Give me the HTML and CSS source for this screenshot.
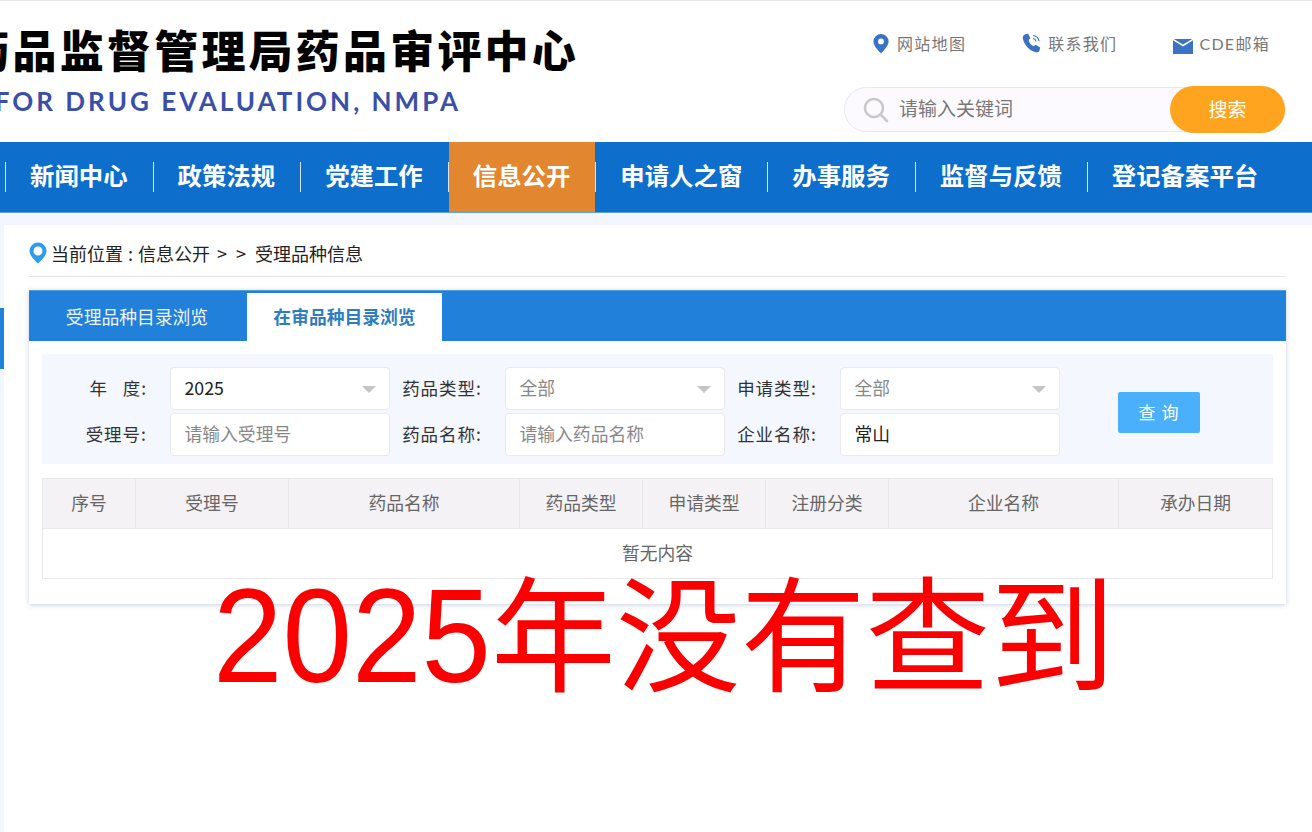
FILE: index.html
```html
<!DOCTYPE html>
<html lang="zh-CN">
<head>
<meta charset="utf-8">
<title>受理品种信息</title>
<link rel="stylesheet" href="styles.css">
</head>
<body>
<div class="page">
  <header class="header">
    <div class="brand">
      <div class="brand-cn">国家药品监督管理局药品审评中心</div>
      <div class="brand-en">CENTER FOR DRUG EVALUATION, NMPA</div>
    </div>
    <div class="tools">
      <div class="links">
        <a class="link link-map">
          <svg class="ico" width="18" height="21" viewBox="0 0 18 21"><path fill="#3a72c4" fill-rule="evenodd" d="M9 1a7.6 7.6 0 0 0-7.6 7.6C1.400 13.500 9 20.500 9 20.500s7.600-7 7.600-11.900A7.600 7.600 0 0 0 9 1zm0 10.300a2.900 2.900 0 1 1 0-5.800 2.900 2.900 0 0 1 0 5.800z"/></svg>
          <span>网站地图</span>
        </a>
        <a class="link link-phone">
          <svg class="ico" width="20" height="20" viewBox="0 0 20 20"><path fill="#3a72c4" d="M3.200 1.200 6 .6l2.400 4.600-1.800 1.700c.6 2.600 2.400 5 5 6.400l2-1.500 4.600 2.700-.6 2.800c-.4 1.600-2 2.400-3.600 2C7.500 18 2 11.500.8 5.500.5 3.500 1.600 1.800 3.200 1.200z"/><path fill="none" stroke="#3a72c4" stroke-width="1.200" d="M11 2.500c3 .2 5.500 2.700 6 5.500M11 5.500c1.500.2 2.700 1.300 3 2.800"/></svg>
          <span>联系我们</span>
        </a>
        <a class="link link-mail">
          <svg class="ico mail" width="20" height="15" viewBox="0 0 20 15"><path fill="#3a72c4" d="M0 1.200 10 7.500l10-6.300V15H0zM.8 0h18.400L10 5.500z"/></svg>
          <span>CDE邮箱</span>
        </a>
      </div>
      <div class="search">
        <svg class="search-ico" width="26" height="26" viewBox="0 0 26 26"><circle cx="11" cy="11" r="9" fill="none" stroke="#c9c9c9" stroke-width="2.600"/><path d="m18 18 6 6" stroke="#c9c9c9" stroke-width="2.600" stroke-linecap="round"/></svg>
        <span class="search-text">请输入关键词</span>
        <button class="search-btn">搜索</button>
      </div>
    </div>
  </header>

  <nav class="nav">
    <a class="nav-item">新闻中心</a>
    <a class="nav-item">政策法规</a>
    <a class="nav-item">党建工作</a>
    <a class="nav-item active">信息公开</a>
    <a class="nav-item">申请人之窗</a>
    <a class="nav-item">办事服务</a>
    <a class="nav-item">监督与反馈</a>
    <a class="nav-item last">登记备案平台</a>
  </nav>

  <div class="body">
    <aside class="side"><div class="side-mark"></div></aside>
    <main class="main">
      <div class="crumb">
        <svg width="18" height="22" viewBox="0 0 18 22"><path fill="#2d9cf0" fill-rule="evenodd" d="M9 .5A8.500 8.500 0 0 0 .5 9C.5 14.500 9 21.500 9 21.500S17.500 14.500 17.500 9A8.500 8.500 0 0 0 9 .5zm0 13a4.500 4.500 0 1 1 0-9 4.500 4.500 0 0 1 0 9z"/></svg>
        <span class="crumb-text">当前位置 : 信息公开<span class="arrows">&gt; &gt;</span>受理品种信息</span>
      </div>
      <section class="card">
        <div class="tabs">
          <div class="tab">受理品种目录浏览</div>
          <div class="tab on">在审品种目录浏览</div>
        </div>
        <div class="card-body">
          <form class="filter">
            <label class="lab">年&nbsp;&nbsp;&nbsp;度:</label>
            <div class="field sel dark">2025</div>
            <label class="lab">药品类型:</label>
            <div class="field sel">全部</div>
            <label class="lab">申请类型:</label>
            <div class="field sel">全部</div>
            <div class="btn-cell"><button type="button" class="query">查 询</button></div>
            <label class="lab">受理号:</label>
            <div class="field">请输入受理号</div>
            <label class="lab">药品名称:</label>
            <div class="field">请输入药品名称</div>
            <label class="lab">企业名称:</label>
            <div class="field dark">常山</div>
          </form>
          <table class="tbl">
            <colgroup>
              <col class="c1"><col class="c2"><col class="c3"><col class="c4"><col class="c5"><col class="c6"><col class="c7"><col class="c8">
            </colgroup>
            <thead>
              <tr><th>序号</th><th>受理号</th><th>药品名称</th><th>药品类型</th><th>申请类型</th><th>注册分类</th><th>企业名称</th><th>承办日期</th></tr>
            </thead>
            <tbody>
              <tr><td colspan="8">暂无内容</td></tr>
            </tbody>
          </table>
        </div>
      </section>
    </main>
  </div>
  <div class="stamp"><span class="stamp-num">2025</span><span class="stamp-cn">年没有查到</span></div>
</div>
</body>
</html>
```
FILE: styles.css
```css
* { box-sizing: border-box; }
html, body { margin: 0; padding: 0; }
body {
  width: 1312px;
  height: 832px;
  overflow: hidden;
  background: #fff;
  font-family: "Noto Sans CJK SC", "Noto Sans", sans-serif;
}
.page { position: relative; width: 1312px; height: 832px; overflow: hidden; }

.header {
  display: flex;
  height: 142px;
  border-top: 1px solid #e6e6e6;
}
.brand { width: 581px; overflow: hidden; flex: none; }
.brand-cn, .brand-en { display: flex; justify-content: flex-end; white-space: nowrap; }
.brand-cn {
  margin-top: 22px;
  padding-right: 2px;
  height: 52px;
  line-height: 52px;
  font-size: 44px;
  font-weight: 900;
  letter-spacing: 3.200px;
  color: #000;
}
.brand-en {
  margin-top: 11px;
  padding-right: 120px;
  height: 30px;
  line-height: 30px;
  font-family: Lato, sans-serif;
  font-size: 26px;
  font-weight: 700;
  letter-spacing: 3px;
  color: #3a4fa8;
}
.tools { flex: 1; position: relative; }
.links { display: flex; height: 30px; margin-top: 27px; padding-left: 291px; font-family: Lato, "Noto Sans CJK SC", sans-serif; font-size: 16px; letter-spacing: 1.300px; color: #777; }
.link { display: flex; align-items: center; gap: 7px; }
.link-phone { margin-left: 56px; gap: 6px; }
.link-mail { margin-left: 56px; gap: 6px; }
.ico { flex: none; }
.mail { margin-top: 6px; }
.search {
  display: flex;
  align-items: center;
  margin: 29px 0 0 263px;
  width: 442px;
  height: 45px;
  background: #fdfaff;
  border: 1px solid #e8e8ee;
  border-radius: 23px;
  padding-left: 18px;
  padding-bottom: 3px;
  position: relative;
}
.search-ico { margin-top: 3px; }
.search-text { margin-left: 10px; padding-bottom: 2px; font-size: 19px; color: #777; }
.search-btn {
  position: absolute;
  right: 0;
  top: -2px;
  width: 115px;
  height: 47px;
  padding: 0 0 3px;
  border: 0;
  border-radius: 24px;
  background: #ffa41f;
  color: #fff;
  font: 400 19px "Noto Sans CJK SC", sans-serif;
}

.nav {
  display: flex;
  height: 71px;
  padding: 0 0 0 5px;
  background: #0d6ecb;
  border-bottom: 1px solid #5aa0dc;
  align-items: stretch;
}
.nav-item {
  position: relative;
  display: flex;
  align-items: center;
  padding: 0 25px 6px;
  font-size: 24.400px;
  font-weight: 700;
  color: #fff;
  white-space: nowrap;
}
.nav-item::before {
  content: "";
  position: absolute;
  left: 0;
  top: 20px;
  height: 30px;
  width: 1px;
  background: #d5e6f6;
}
.nav-item.active {
  padding-left: 24px;
  border-left: 1px solid transparent;
  background: #e2862f padding-box;
}
.nav-item.active::before { left: -1px; }

.body {
  display: flex;
  background: #f3f6fe;
  height: 620px;
  padding-top: 12px;
}
.side { width: 4px; flex: none; position: relative; }
.side-mark { margin-top: 83px; height: 61px; background: #1f82dc; }
.main { flex: 1; background: #fff; padding: 0 27px 0 25px; }

.crumb {
  display: flex;
  align-items: center;
  gap: 4px;
  height: 52px;
  border-bottom: 1px solid #e6e6e6;
  font-size: 18px;
  color: #222;
  padding-top: 5px;
}
.crumb-text { word-spacing: 1px; }
.arrows { margin: 0 9px 0 7px; word-spacing: 5px; }
.card {
  margin-top: 13px;
  box-shadow: 0 1px 5px rgba(60, 90, 150, .28);
  height: 314px;
}
.tabs { display: flex; height: 51px; padding-top: 2px; background: #2080da; border-top: 1px solid #4d9ee0; }
.tab {
  width: 218px;
  display: flex;
  align-items: center;
  justify-content: center;
  padding: 0 2px 2px 0;
  font-size: 17.800px;
  color: #eef6ff;
}
.tab.on { width: 195px; padding-right: 0; background: #fff; color: #2f7dbf; font-weight: 700; }

.card-body { padding: 13px 13px 0; }
.filter {
  display: grid;
  grid-template-columns: 128px 220px 115px 220px 115px 220px 1fr;
  grid-auto-rows: 43px;
  row-gap: 3px;
  height: 110px;
  padding-top: 13px;
  background: #f5f7fe;
}
.lab {
  display: flex;
  align-items: center;
  justify-content: flex-end;
  padding: 0 23px 3px 0;
  font-size: 17.500px;
  letter-spacing: 1px;
  color: #333;
  white-space: nowrap;
}
.field {
  position: relative;
  display: flex;
  align-items: center;
  padding: 0 0 3px 13.500px;
  background: #fff;
  border: 1px solid #e9e9ef;
  border-radius: 4px;
  font-size: 17.800px;
  color: #888;
}
.field.dark { color: #222; }
.sel::after {
  content: "";
  position: absolute;
  right: 13px;
  top: 18px;
  border-style: solid;
  border-width: 7px 7.500px 0;
  border-color: #c4c4c4 transparent transparent;
}
.btn-cell { grid-column: 7; grid-row: 1 / 3; display: flex; align-items: center; padding: 2px 0 0 58px; }
.query {
  width: 82px;
  height: 41px;
  padding: 0 0 3px;
  border: 0;
  border-radius: 2px;
  background: #4bb0fb;
  color: #fff;
  font: 17px "Noto Sans CJK SC", sans-serif;
  letter-spacing: 1px;
}

.tbl {
  margin-top: 14px;
  width: 1230px;
  table-layout: fixed;
  border-collapse: collapse;
  font-size: 17.800px;
  color: #666;
}
.c1 { width: 93px; } .c2 { width: 153px; } .c3 { width: 231px; } .c4, .c5, .c6 { width: 123px; } .c7 { width: 230px; } .c8 { width: 154px; }
.tbl th, .tbl td { height: 50px; border: 1px solid #e8e8ec; text-align: center; font-weight: 400; padding: 0 0 3px; }
.tbl th { background: #f5f2f6; }

.stamp {
  position: absolute;
  left: 213px;
  top: 553px;
  display: flex;
  align-items: baseline;
  line-height: 150px;
  color: #fb0000;
  white-space: nowrap;
}
.stamp-num {
  display: block;
  margin-right: -20px;
  font-family: "Liberation Sans", sans-serif;
  font-size: 134px;
  transform: scaleX(.933);
  transform-origin: left center;
}
.stamp-cn {
  font-family: "Noto Sans CJK SC", sans-serif;
  font-size: 124.800px;
}
```
